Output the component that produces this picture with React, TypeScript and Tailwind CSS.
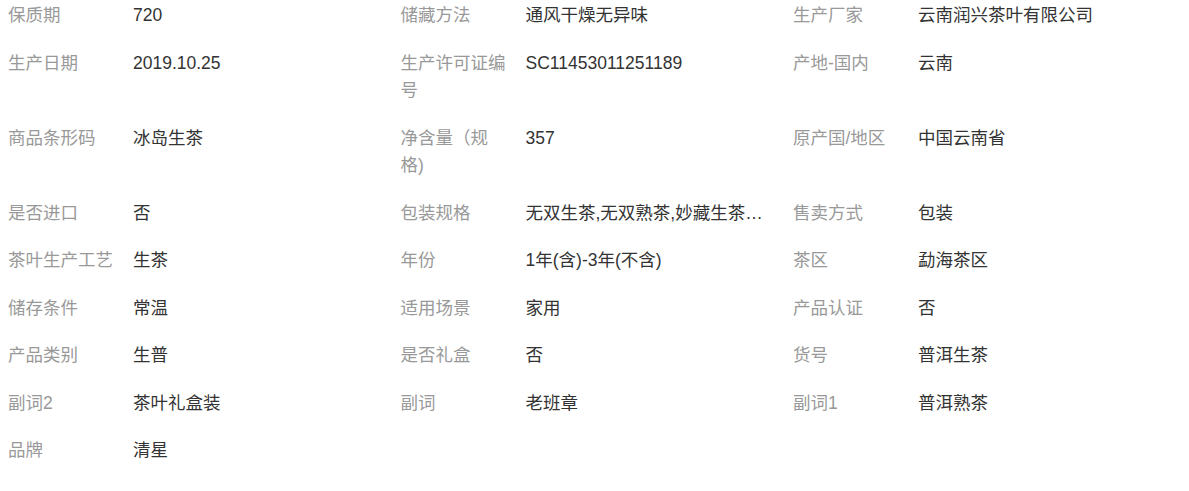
const items: [string, string][] = [
  ['保质期', '720'],
  ['储藏方法', '通风干燥无异味'],
  ['生产厂家', '云南润兴茶叶有限公司'],
  ['生产日期', '2019.10.25'],
  ['生产许可证编号', 'SC11453011251189'],
  ['产地-国内', '云南'],
  ['商品条形码', '冰岛生茶'],
  ['净含量（规格)', '357'],
  ['原产国/地区', '中国云南省'],
  ['是否进口', '否'],
  ['包装规格', '无双生茶,无双熟茶,妙藏生茶,妙藏熟茶'],
  ['售卖方式', '包装'],
  ['茶叶生产工艺', '生茶'],
  ['年份', '1年(含)-3年(不含)'],
  ['茶区', '勐海茶区'],
  ['储存条件', '常温'],
  ['适用场景', '家用'],
  ['产品认证', '否'],
  ['产品类别', '生普'],
  ['是否礼盒', '否'],
  ['货号', '普洱生茶'],
  ['副词2', '茶叶礼盒装'],
  ['副词', '老班章'],
  ['副词1', '普洱熟茶'],
  ['品牌', '清星'],
]

export default function App() {
  return (
    <div
      className="min-h-[491px] bg-white pl-2 pt-[2px] text-[17.5px] leading-[27.5px]"
      style={{ fontFamily: '"Liberation Sans", "Noto Sans CJK SC", sans-serif' }}
    >
      <div className="grid w-[1177.5px] grid-cols-3">
        {items.map(([label, value]) => (
          <div key={label} className="mb-5 flex">
            <div className="w-[125px] shrink-0 pr-[17px] text-[#999]">{label}</div>
            <div className="w-[240px] truncate text-[#333]">{value}</div>
          </div>
        ))}
      </div>
    </div>
  )
}
